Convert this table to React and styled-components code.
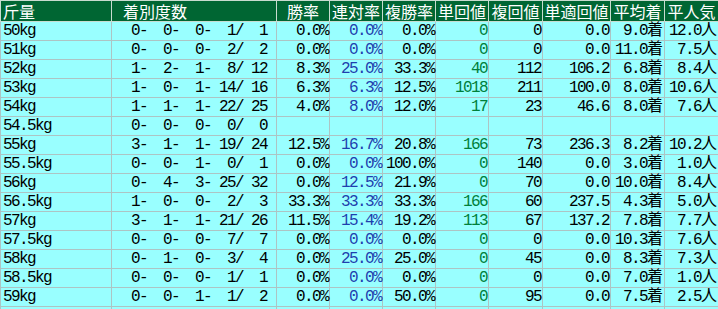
import React from 'react';
import styled, { createGlobalStyle } from 'styled-components';

const GlobalStyle = createGlobalStyle`
    html, body {
        margin: 0;
        padding: 0;
        background: #99ffff;
        overflow: hidden;
    }
`

const rows = [
    ['50kg', [0, 0, 0, 1, 1], '0.0%', '0.0%', '0.0%', '0', '0', '0.0', '9.0', '12.0'],
    ['51kg', [0, 0, 0, 2, 2], '0.0%', '0.0%', '0.0%', '0', '0', '0.0', '11.0', '7.5'],
    ['52kg', [1, 2, 1, 8, 12], '8.3%', '25.0%', '33.3%', '40', '112', '106.2', '6.8', '8.4'],
    ['53kg', [1, 0, 1, 14, 16], '6.3%', '6.3%', '12.5%', '1018', '211', '100.0', '8.0', '10.6'],
    ['54kg', [1, 1, 1, 22, 25], '4.0%', '8.0%', '12.0%', '17', '23', '46.6', '8.0', '7.6'],
    ['54.5kg', [0, 0, 0, 0, 0]],
    ['55kg', [3, 1, 1, 19, 24], '12.5%', '16.7%', '20.8%', '166', '73', '236.3', '8.2', '10.2'],
    ['55.5kg', [0, 0, 1, 0, 1], '0.0%', '0.0%', '100.0%', '0', '140', '0.0', '3.0', '1.0'],
    ['56kg', [0, 4, 3, 25, 32], '0.0%', '12.5%', '21.9%', '0', '70', '0.0', '10.0', '8.4'],
    ['56.5kg', [1, 0, 0, 2, 3], '33.3%', '33.3%', '33.3%', '166', '60', '237.5', '4.3', '5.0'],
    ['57kg', [3, 1, 1, 21, 26], '11.5%', '15.4%', '19.2%', '113', '67', '137.2', '7.8', '7.7'],
    ['57.5kg', [0, 0, 0, 7, 7], '0.0%', '0.0%', '0.0%', '0', '0', '0.0', '10.3', '7.6'],
    ['58kg', [0, 1, 0, 3, 4], '0.0%', '25.0%', '25.0%', '0', '45', '0.0', '8.3', '7.3'],
    ['58.5kg', [0, 0, 0, 1, 1], '0.0%', '0.0%', '0.0%', '0', '0', '0.0', '7.0', '1.0'],
    ['59kg', [0, 0, 1, 1, 2], '0.0%', '0.0%', '50.0%', '0', '95', '0.0', '7.5', '2.5'],
]

const widths = [111, 165, 53, 53, 53, 53, 54, 68, 54, 54]

const headers = ['斤量', '着別度数', '勝率', '連対率', '複勝率', '単回値', '複回値', '単適回値', '平均着', '平人気']

const pad = (n) => String(n).padStart(3, ' ')

const record = ([a, b, c, d, e]) => `${pad(a)}-${pad(b)}-${pad(c)}-${pad(d)}/${pad(e)}`

const Grid = styled.table`
    border-collapse: collapse;
    table-layout: fixed;
    width: 718px;
    background: #99ffff;
    font-family: "Liberation Mono", "Noto Sans CJK JP", monospace;
    font-size: 16px;
    color: #000;
`

const Head = styled.th`
    background: #006633;
    padding: 0;
    border: 1px solid #c8dcd0;
    font-weight: normal;
`

const HeadText = styled.div`
    height: 20px;
    line-height: 20px;
    color: #fff;
    font-family: "Noto Sans CJK JP", sans-serif;
    font-size: 16px;
    white-space: nowrap;
    text-align: ${p => p.$align || 'center'};
    padding-left: ${p => p.$indent || 0}px;
`

const Cell = styled.td`
    padding: 0;
    border: 1px solid #adc4c4;
`

const CellText = styled.div`
    height: 18px;
    line-height: 18px;
    padding: 0 1px 0 ${p => p.$indent || 0}px;
    text-align: ${p => p.$align || 'right'};
    color: ${p => p.$tone || '#000'};
    letter-spacing: -1.6px;
    white-space: pre;
`

const Unit = styled.span`
    letter-spacing: 0;
`

const Value = ({ children, ...rest }) => (
    <Cell><CellText {...rest}>{children}</CellText></Cell>
)

export default function App() {
    return (
        <>
            <GlobalStyle />
            <Grid>
                <colgroup>
                    {widths.map((w, i) => <col key={i} style={{ width: w }} />)}
                </colgroup>
                <thead>
                    <tr>
                        {headers.map((h, i) => (
                            <Head key={h}>
                                <HeadText
                                    $align={i < 2 ? 'left' : 'center'}
                                    $indent={i === 0 ? 2 : i === 1 ? 11 : 0}
                                >{h}</HeadText>
                            </Head>
                        ))}
                    </tr>
                </thead>
                <tbody>
                    {rows.map(([kg, rec, win, ren, fuku, tan, fukuK, tekiK, avg, pop]) => (
                        <tr key={kg}>
                            <Value $align="left" $indent={2}>{kg}</Value>
                            <Value $align="left" $indent={3}>{record(rec)}</Value>
                            <Value>{win}</Value>
                            <Value $tone="#1f3fae">{ren}</Value>
                            <Value>{fuku}</Value>
                            <Value $tone="#00803a">{tan}</Value>
                            <Value>{fukuK}</Value>
                            <Value>{tekiK}</Value>
                            <Value>{avg && <>{avg}<Unit>着</Unit></>}</Value>
                            <Value>{pop && <>{pop}<Unit>人</Unit></>}</Value>
                        </tr>
                    ))}
                    <tr>
                        {widths.map((w, i) => <Value key={i} />)}
                    </tr>
                </tbody>
            </Grid>
        </>
    )
}
